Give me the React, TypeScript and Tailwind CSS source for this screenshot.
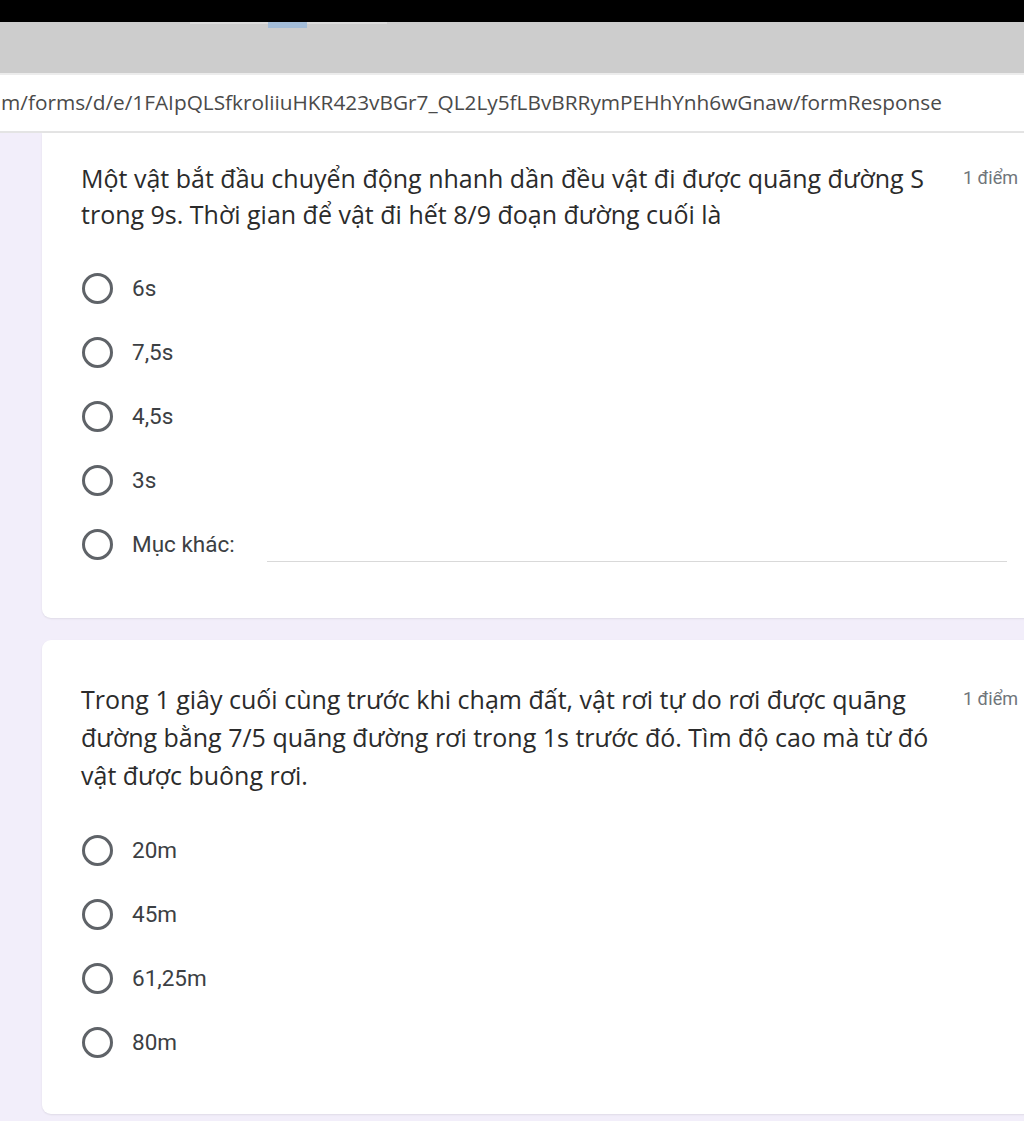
import React from "react";

function Radio({ label, other }: { label: string; other?: boolean }) {
  return (
    <div className="flex h-[64px] items-center">
      <div className="ml-[40px] h-[31px] w-[31px] shrink-0 rounded-full border-[3px] border-[#5f6368]" />
      <span
        className="ml-[19px] text-[22.5px] text-[#3c4043]"
        style={{ fontFamily: "Roboto, sans-serif" }}
      >
        {label}
      </span>
      {other && <div className="ml-[32px] mt-[34px] h-[1px] w-[740px] bg-[#d9d9d9]" />}
    </div>
  );
}

function Card({
  question,
  options,
  other,
  className,
}: {
  question: string;
  options: string[];
  other?: boolean;
  className: string;
}) {
  return (
    <div className={"w-[1010px] bg-white rounded-[9px] shadow-[0_1px_2px_rgba(0,0,0,0.08)] " + className}>
      <div className="flex items-start">
        <div
          className="ml-[39px] w-[862px] text-[25px] text-[#2b2b2b]"
          style={{ fontFamily: '"Open Sans", sans-serif' }}
        >
          {question}
        </div>
        <div
          className="ml-[20px] text-[18px] text-[#70757a] whitespace-nowrap"
          style={{ fontFamily: "Roboto, sans-serif" }}
        >
          1 điểm
        </div>
      </div>
      <div className="mt-[24px]">
        {options.map((o) => (
          <Radio key={o} label={o} />
        ))}
        {other && <Radio label="Mục khác:" other />}
      </div>
    </div>
  );
}

export default function App() {
  return (
    <div className="relative h-[1121px] w-[1024px] overflow-hidden bg-[#f2eefa]">
      <div className="h-[22px] bg-black" />
      <div className="h-[51px] bg-[#cdcdcd]">
        <div className="flex items-start">
          <div className="w-[190px]" />
          <div className="h-[2px] w-[78px] bg-[#dcdcdc]" />
          <div className="h-[6px] w-[39px] bg-[#a3bcd8]" />
          <div className="h-[2px] w-[80px] bg-[#dcdcdc]" />
        </div>
      </div>
      <div className="h-[2px] bg-[#ececec]" />
      <div className="flex h-[58px] items-center border-b-2 border-[#e4e4e4] bg-white">
        <span
          className="pl-[1px] text-[20.8px] text-[#4a4a4a] whitespace-nowrap"
          style={{ fontFamily: '"Open Sans", sans-serif' }}
        >
          m/forms/d/e/1FAIpQLSfkroliiuHKR423vBGr7_QL2Ly5fLBvBRRymPEHhYnh6wGnaw/formResponse
        </span>
      </div>
      <div className="pl-[42px]">
        <Card
          className="rounded-t-none pt-[27px] pb-[42px] leading-[36px]"
          question="Một vật bắt đầu chuyển động nhanh dần đều vật đi được quãng đường S trong 9s. Thời gian để vật đi hết 8/9 đoạn đường cuối là"
          options={["6s", "7,5s", "4,5s", "3s"]}
          other
        />
        <Card
          className="mt-[22px] pt-[40px] pb-[40px] leading-[38px]"
          question="Trong 1 giây cuối cùng trước khi chạm đất, vật rơi tự do rơi được quãng đường bằng 7/5 quãng đường rơi trong 1s trước đó. Tìm độ cao mà từ đó vật được buông rơi."
          options={["20m", "45m", "61,25m", "80m"]}
        />
      </div>
    </div>
  );
}
